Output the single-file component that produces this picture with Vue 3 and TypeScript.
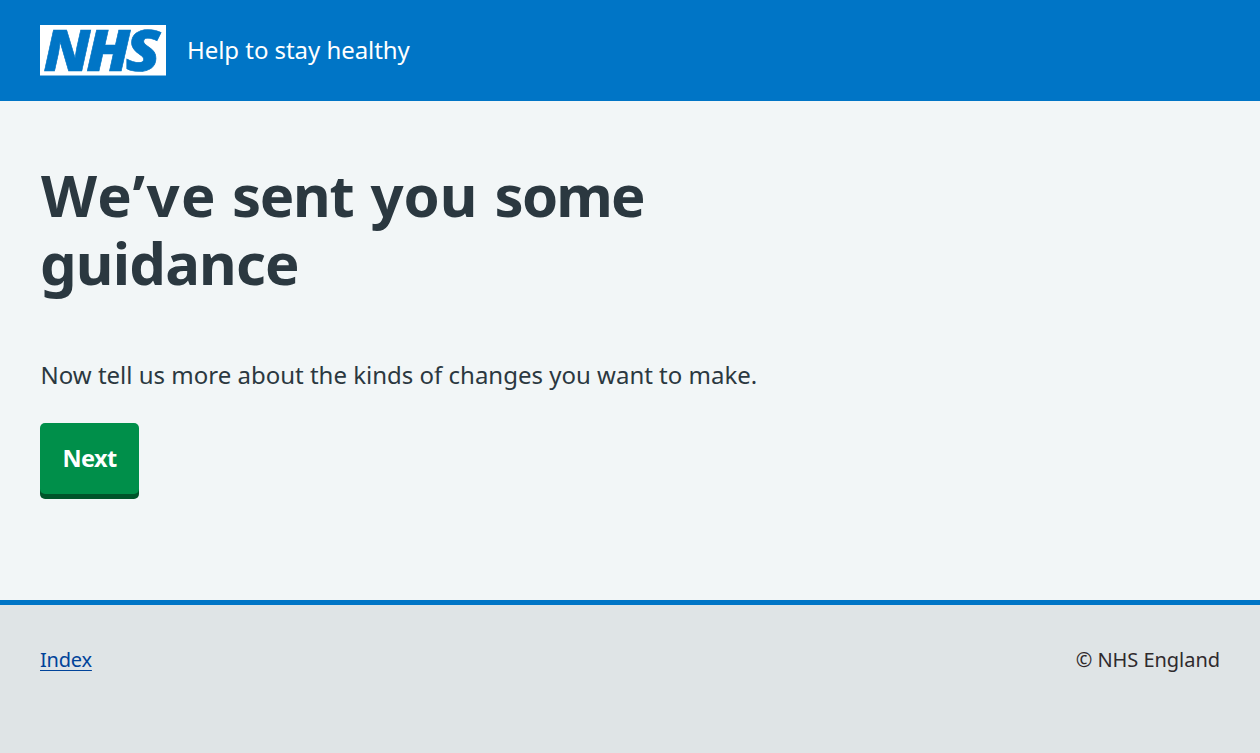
<script setup lang="ts">
const service: string = 'Help to stay healthy'
const owner: string = '© NHS England'
</script>

<template>
  <div class="page">
    <header class="header">
      <svg class="logo" viewBox="0 0 126 51" role="img" aria-label="NHS">
        <rect width="126" height="50.5" fill="#fff" />
        <g class="letters">
          <text x="3.5" y="45.5" textLength="47" lengthAdjust="spacingAndGlyphs">N</text>
          <text x="46.3" y="45.5" textLength="44" lengthAdjust="spacingAndGlyphs">H</text>
          <text x="85.5" y="45.5" textLength="35" lengthAdjust="spacingAndGlyphs">S</text>
        </g>
      </svg>
      <span class="service">{{ service }}</span>
    </header>
    <main class="main">
      <h1>
        <span class="we">We’ve</span> <span class="sent">sent</span> <span class="you">you</span> <span class="some">some</span><br />
        <span class="guidance">guidance</span>
      </h1>
      <p>Now tell us more about the kinds of changes you want to make.</p>
      <button class="button" type="button"><span>Next</span></button>
    </main>
    <footer class="footer">
      <a href="#">Index</a>
      <span class="owner">{{ owner }}</span>
    </footer>
  </div>
</template>

<style>
body {
  margin: 0;
  background: #dfe4e6;
}
</style>

<style scoped>
.page {
  height: 753px;
  display: flex;
  flex-direction: column;
  overflow: hidden;
  background: #f2f6f7;
  color: #2b3840;
  font-family: "Noto Sans", "Open Sans", sans-serif;
}
.header {
  height: 101px;
  box-sizing: border-box;
  padding: 0 40px;
  display: flex;
  align-items: center;
  background: #0075c6;
  color: #fff;
}
.logo {
  width: 126px;
  height: 51px;
  margin-right: 21px;
}
.letters {
  fill: #0075c6;
  stroke: #0075c6;
  stroke-width: 0.6;
  font: italic 800 56px "Open Sans", "Noto Sans", sans-serif;
}
.service {
  font-size: 24px;
  line-height: 34px;
  padding-bottom: 2px;
  letter-spacing: -0.05px;
}
.main {
  height: 499px;
  box-sizing: border-box;
  padding: 60px 40px 0;
}
h1 {
  margin: 0;
  padding-left: 1px;
  font-size: 58px;
  line-height: 68px;
  font-weight: 700;
}
.we {
  letter-spacing: 1.3px;
}
.sent {
  letter-spacing: -1.3px;
  margin-right: 2px;
}
.you {
  letter-spacing: 0;
  margin-right: 2px;
}
.some {
  letter-spacing: -1.8px;
}
.guidance {
  letter-spacing: -0.8px;
  margin-left: -1px;
}
p {
  margin: 60px 0 0;
  padding-left: 0.5px;
  font-size: 24px;
  line-height: 36px;
}
.button {
  display: flex;
  align-items: center;
  justify-content: center;
  margin: 30px 0 0;
  padding: 0 0 1px;
  box-sizing: border-box;
  width: 99px;
  height: 71px;
  border: 0;
  border-radius: 5px;
  background: #008f4a;
  box-shadow: 0 5px 0 #00542a;
  color: #fff;
  font: 700 23.5px/36px "Noto Sans", "Open Sans", sans-serif;
  letter-spacing: -0.6px;
}
.footer {
  flex: 1;
  box-sizing: border-box;
  padding: 40px 40px 0;
  display: flex;
  justify-content: space-between;
  align-items: flex-start;
  border-top: 5px solid #0075c6;
  background: #dfe4e6;
  font-size: 20px;
  line-height: 30px;
}
a {
  color: #00439a;
  letter-spacing: -0.2px;
  text-decoration-thickness: 1px;
  text-underline-offset: 3px;
}
.owner {
  color: #2f2a2d;
  letter-spacing: -0.04px;
}
</style>
